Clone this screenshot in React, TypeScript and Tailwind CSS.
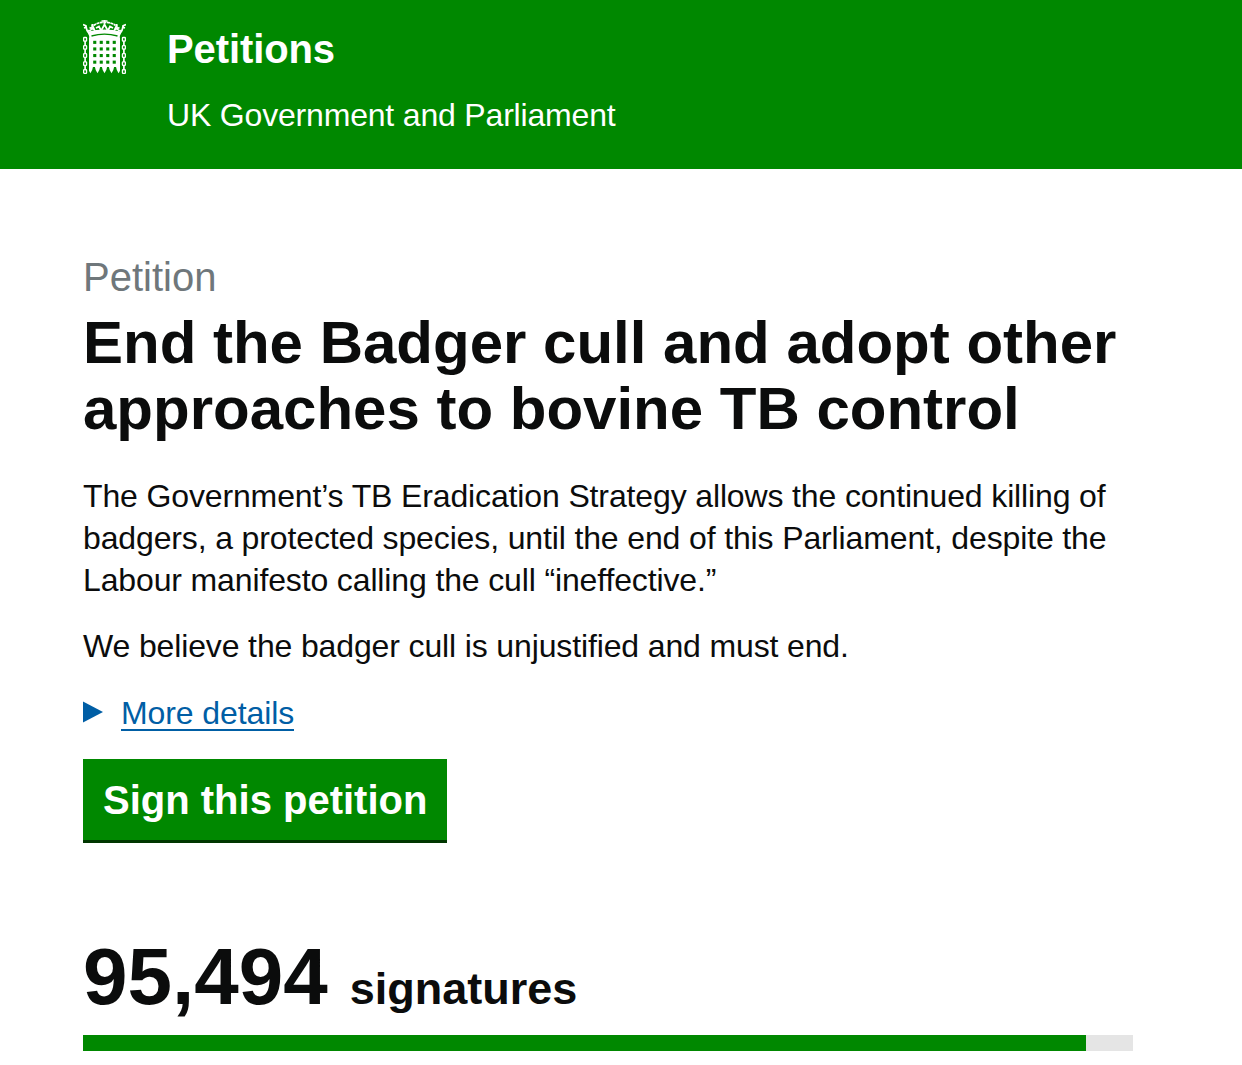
const SIGNATURES = 95494
const THRESHOLD = 100000

const HOLE_COLUMNS = [10.2, 16.7, 23.2, 29.7]
const HOLE_ROWS = [20.8, 27.4, 34, 40.6]
const GATE_BARS = [7.4, 14.5, 21.5, 28.5, 35.600]
const CHAIN_LINKS = [17.5, 25.6, 33.7, 41.8, 49.700]

function Chain({ x }: { x: number }) {
  return (
    <g fill="none" stroke="white" strokeWidth={1.3}>
      {CHAIN_LINKS.map((y) => (
        <rect key={y} x={x + 0.65} y={y} width={2.9} height={3.6} rx={0.6} />
      ))}
      {CHAIN_LINKS.slice(0, 4).map((y) => (
        <path key={y} d={`M${x + 2.1} ${y + 3.2}v5.200`} strokeWidth={1.7} />
      ))}
    </g>
  )
}

function Portcullis() {
  return (
    <svg className="h-[54px] w-[43px]" viewBox="0 0 43 54" aria-hidden="true">
      {/* Crown */}
      <g fill="none" stroke="white" strokeWidth={1.7}>
        <path d="M0 4.500L3.500 6M43 4.500L39.500 6M1 8l3-1M42 8l-3-1" />
        <path d="M2.500 5.500Q3.500 11 7 15M40.500 5.500Q39.500 11 36 15" />
        <path d="M5 10.500Q9 12 9.500 4M38 10.500Q34 12 33.500 4" />
        <path d="M9 4.500L12 11M34 4.500L31 11M6.500 7.500L12 10M36.500 7.500L31 10" />
        <path d="M10.500 5.500Q15 2 21.500 2.500Q28 2 32.500 5.500" strokeDasharray="3 .5" />
        <path d="M21.500 0v5M18.500 1h6M21.500 4.500L18.500 10M21.500 4.500L24.500 10" />
        <path d="M13 8l3-1.500 2 4M30 8l-3-1.500-2 4" />
      </g>
      <path d="M5 11.500Q21.500 7.500 38 11.500L36.500 18H6.500Z" fill="white" />
      <path d="M8.500 16Q21.500 12.400 34.500 16" fill="none" stroke="#008800" strokeWidth={1.3} />

      {/* Gate */}
      <path d="M6 17.500Q21.500 14 37 17.500V47H6Z" fill="white" />
      {GATE_BARS.map((x) => (
        <path key={x} d={`M${x - 2.8} 46h5.600l-1 4-1.800 3.300-1.800-3.300z`} fill="white" />
      ))}
      <path d="M4 45h2v6H4zM37 45h2v6h-2z" fill="#008800" />
      {HOLE_ROWS.map((y) =>
        HOLE_COLUMNS.map((x) => (
          <rect key={`${x}-${y}`} x={x} y={y} width={3.1} height={3.1} fill="#008800" />
        )),
      )}
      <Chain x={0} />
      <Chain x={38.8} />
    </svg>
  )
}

function Header() {
  return (
    <header className="h-[169px] bg-[#008800] px-[83px] pt-5 text-white">
      <div className="flex gap-[41px]">
        <Portcullis />
        <div>
          <p className="pt-1 text-[40px] leading-[50px] font-bold tracking-[-0.1px]">Petitions</p>
          <p className="mt-5 text-[32px] leading-[42px] tracking-[-0.18px]">UK Government and Parliament</p>
        </div>
      </div>
    </header>
  )
}

function SignatureCount() {
  const percent = (SIGNATURES / THRESHOLD) * 100

  return (
    <section className="mt-[89px]">
      <p className="flex items-baseline gap-[22px] leading-[90px] font-bold">
        <span className="text-[80px]">{SIGNATURES.toLocaleString('en-GB')}</span>
        <span className="text-[45px]">signatures</span>
      </p>
      <div className="mt-px h-4 bg-[#e5e5e5]">
        <div className="h-full bg-[#008800]" style={{ width: `${percent}%` }} />
      </div>
    </section>
  )
}

export default function App() {
  return (
    <div className="h-[1065px] overflow-hidden bg-white font-['Liberation_Sans',Arial,sans-serif] text-[#0b0c0c]">
      <Header />
      <main className="ml-[83px] w-[1050px] pt-[83px]">
        <h1 className="text-[60px] leading-[66px] font-bold">
          <span className="block text-[40px] leading-[50px] font-normal text-[#6f777b]">Petition</span>
          <span className="mt-2 block">End the Badger cull and adopt other approaches to bovine TB control</span>
        </h1>

        <div className="mt-[33px] space-y-6 text-[32px] leading-[42px] tracking-[-0.135px]">
          <p>
            The Government’s TB Eradication Strategy allows the continued killing of badgers, a protected
            species, until the end of this Parliament, despite the Labour manifesto calling the cull “ineffective.”
          </p>
          <p>We believe the badger cull is unjustified and must end.</p>
        </div>

        <a href="#details" className="mt-[31px] flex items-start text-[32px] leading-[31px] tracking-[-0.1px] text-[#005ea5]">
          <svg className="mt-[3px] mr-[18px] h-[22px] w-5" viewBox="0 0 20 22" fill="currentColor">
            <path d="M0 0.500L20 11L0 21.500Z" />
          </svg>
          <span className="border-b-2 border-[#005ea5]">More details</span>
        </a>

        <button className="mt-7 block h-[84px] border-b-[3px] border-[#003600] bg-[#008800] px-5 text-[40px] leading-[50px] font-bold text-white">
          Sign this petition
        </button>

        <SignatureCount />
      </main>
    </div>
  )
}
